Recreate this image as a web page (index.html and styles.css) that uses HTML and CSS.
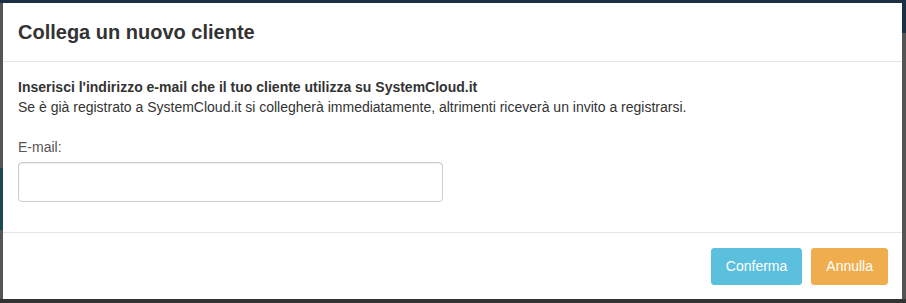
FILE: index.html
```html
<!DOCTYPE html>
<html lang="it">
<head>
    <meta charset="UTF-8">
    <meta name="viewport" content="width=device-width, initial-scale=1.0">
    <title>Collega un nuovo cliente</title>
    <link rel="stylesheet" href="styles.css">
</head>
<body>
    <!-- Modal dialog over the dimmed page -->
    <div class="modal">
        <div class="modal-header">
            <h4 class="modal-title">Collega un nuovo cliente</h4>
        </div>

        <div class="modal-body">
            <p class="intro">
                <strong>Inserisci l'indirizzo e-mail che il tuo cliente utilizza su SystemCloud.it</strong><br>
                Se è già registrato a SystemCloud.it si collegherà immediatamente, altrimenti riceverà un invito a registrarsi.
            </p>
            <div class="form-group">
                <label for="email">E-mail:</label>
                <input type="email" id="email" class="form-control">
            </div>
        </div>

        <div class="modal-footer">
            <button class="btn btn-info">Conferma</button>
            <button class="btn btn-warning">Annulla</button>
        </div>
    </div>
</body>
</html>
```

FILE: styles.css
```css
/* Basic reset */
* {
    margin: 0;
    padding: 0;
    box-sizing: border-box;
}

/* Dimmed page behind the modal */
body {
    height: 303px;
    padding: 3px 4px 4px 3px;
    font-family: 'Liberation Sans', Arial, sans-serif;
    font-size: 14px;
    line-height: 20px;
    color: #333;
    background:
        linear-gradient(#1b3044, #1b3044) top left / 100% 3px no-repeat,
        linear-gradient(#1b3044, #1b3044) top right / 4px 33px no-repeat,
        linear-gradient(#333, #333) bottom left / 100% 4px no-repeat,
        linear-gradient(#1f4853, #1f4853) left 168px / 3px 62px no-repeat,
        #555;
    overflow: hidden;
}

/* Modal box */
.modal {
    display: flex;
    flex-direction: column;
    height: 100%;
    background-color: #fff;
}

.modal-header {
    padding: 15px;
    border-bottom: 1px solid #e5e5e5;
}

.modal-title {
    font-size: 20px;
    font-weight: bold;
    line-height: 28px;
    color: #333;
}

.modal-body {
    padding: 15px;
}

.intro {
    margin-bottom: 20px;
}

/* Form */
.form-group label {
    display: block;
    color: #555;
    margin-bottom: 5px;
}

.form-control {
    display: block;
    width: 425px;
    height: 40px;
    border: 1px solid #ccc;
    border-radius: 4px;
    background-color: #fff;
    box-shadow: inset 0 1px 1px rgba(0, 0, 0, 0.075);
}

/* Footer with buttons */
.modal-footer {
    display: flex;
    justify-content: flex-end;
    gap: 9px;
    padding: 15px 14px 14px 15px;
    border-top: 1px solid #e5e5e5;
    margin-top: auto;
}

.btn {
    font-family: inherit;
    font-size: 14px;
    line-height: 19px;
    padding: 8px 14px;
    color: #fff;
    border: 1px solid transparent;
    border-radius: 3px;
}

.btn-info {
    background-color: #5bc0de;
    border-color: #5bc0de;
}

.btn-warning {
    background-color: #f0ad4e;
    border-color: #f0ad4e;
}
```
